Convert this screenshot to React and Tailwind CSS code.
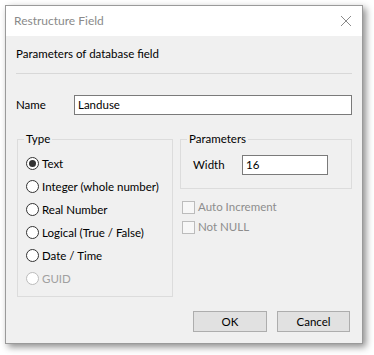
import React from 'react';

function Radio({ label, checked, disabled }) {
  return (
    <div className="flex items-center h-[23px]">
      <span
        className={`w-[13px] h-[13px] rounded-full border bg-white flex items-center justify-center ${
          disabled ? 'border-[#bcbcbc]' : 'border-[#333333]'
        }`}
      >
        {checked && <span className="w-[7px] h-[7px] rounded-full bg-[#333333]" />}
      </span>
      <span className={`ml-[3px] whitespace-nowrap ${disabled ? 'text-[#a0a0a0]' : 'text-black'}`}>{label}</span>
    </div>
  );
}

function Check({ label }) {
  return (
    <div className="flex items-center h-[20px] ml-[2px]">
      <span className="w-[13px] h-[13px] border border-[#bcbcbc] bg-[#f7f7f7]" />
      <span className="ml-[3px] whitespace-nowrap text-[#8d8d8d]">{label}</span>
    </div>
  );
}

export default function App() {
  const types = [
    { label: 'Text', checked: true },
    { label: 'Integer (whole number)' },
    { label: 'Real Number' },
    { label: 'Logical (True / False)' },
    { label: 'Date / Time' },
    { label: 'GUID', disabled: true },
  ];

  return (
    <div
      className="w-[374px] h-[355px] bg-white pt-[5px] pl-[5px] text-[11.5px] leading-[16px]"
      style={{ fontFamily: 'Lato, "Liberation Sans", sans-serif' }}
    >
      <div className="w-[358px] h-[339px] border border-[#9a9a9a] bg-[#f0f0f0] shadow-[3px_3px_7px_rgba(0,0,0,0.45)] flex flex-col">
        {/* title bar */}
        <div className="h-[30px] bg-white flex items-center justify-between pl-[8px] pr-[10px]">
          <span className="text-[12px] text-[#8a8a8a]">Restructure Field</span>
          <svg width="12" height="12" viewBox="0 0 12 12">
            <path d="M1 1 L11 11 M11 1 L1 11" stroke="#8a8a8a" strokeWidth="1" />
          </svg>
        </div>

        <div className="flex-1 px-[10px] pt-[10px]">
          <div className="text-black">Parameters of database field</div>
          <div className="mt-[11px] h-px bg-[#d8d8d8]" />

          <div className="mt-[21px] flex items-center h-[20px]">
            <span className="w-[58px]">Name</span>
            <div className="flex-1 h-[20px] border border-[#7a7a7a] bg-white flex items-center px-[3px]">
              Landuse
            </div>
          </div>

          <div className="mt-[24px] flex">
            {/* Type group */}
            <div className="ml-px w-[156px] h-[158px] border border-[#dcdcdc]">
              <span className="block w-fit -mt-[9px] ml-[6px] px-[2px] bg-[#f0f0f0]">Type</span>
              <div className="mt-[5px] pl-[8px]">
                {types.map((t) => (
                  <Radio key={t.label} {...t} />
                ))}
              </div>
            </div>

            <div className="ml-[7px] flex flex-col">
              {/* Parameters group */}
              <div className="w-[172px] h-[50px] border border-[#dcdcdc]">
                <span className="block w-fit -mt-[9px] ml-[6px] px-[2px] bg-[#f0f0f0]">Parameters</span>
                <div className="mt-[8px] pl-[12px] flex items-center">
                  <span className="w-[49px]">Width</span>
                  <div className="w-[86px] h-[20px] border border-[#7a7a7a] bg-white flex items-center px-[3px]">
                    16
                  </div>
                </div>
              </div>
              <div className="mt-[8px]">
                <Check label="Auto Increment" />
                <Check label="Not NULL" />
              </div>
            </div>
          </div>

          <div className="mt-[14px] flex justify-end gap-[10px] mr-[2px]">
            <button className="w-[74px] h-[21px] border border-[#adadad] bg-[#e1e1e1] text-black">OK</button>
            <button className="w-[73px] h-[21px] border border-[#adadad] bg-[#e1e1e1] text-black">Cancel</button>
          </div>
        </div>
      </div>
    </div>
  );
}
